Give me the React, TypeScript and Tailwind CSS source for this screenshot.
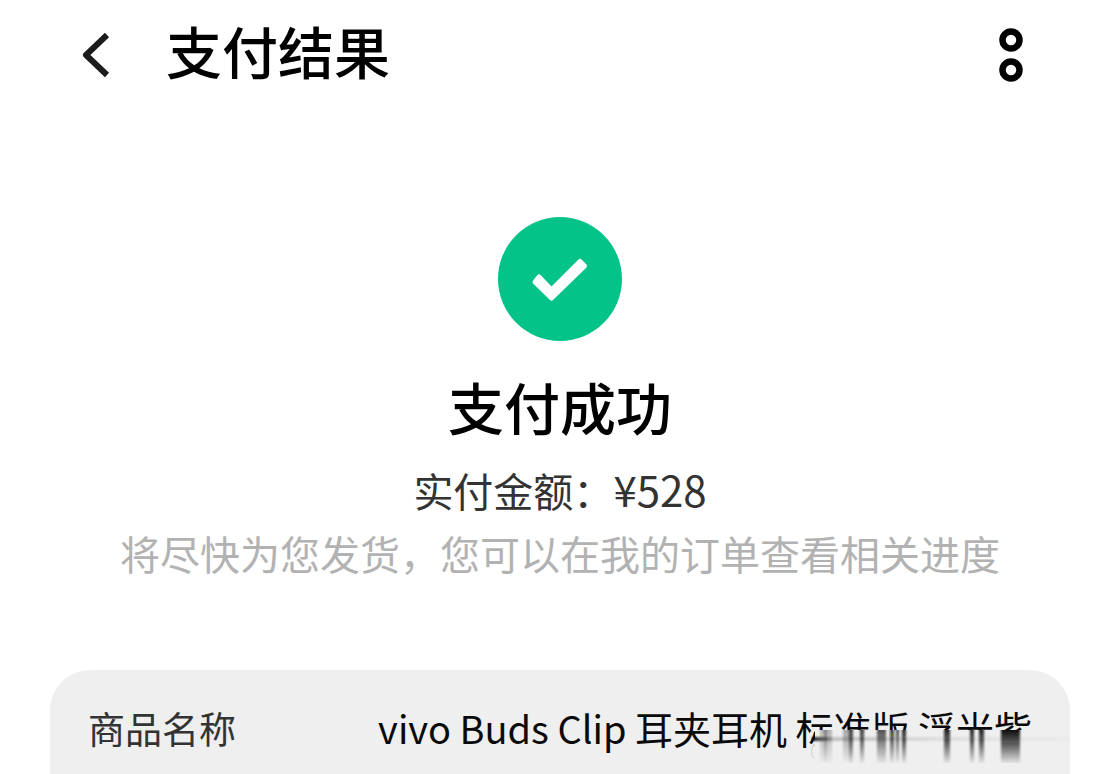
const streaks = [
  { x: 820, w: 12, o: 0.25 },
  { x: 824, w: 3, o: 0.3 },
  { x: 843, w: 9, o: 0.3 },
  { x: 849, w: 4, o: 0.7 },
  { x: 860, w: 4, o: 0.8 },
  { x: 877, w: 9, o: 0.65 },
  { x: 890, w: 4, o: 0.8 },
  { x: 896, w: 3, o: 0.7 },
  { x: 902, w: 4, o: 0.9 },
  { x: 944, w: 6, o: 0.9 },
  { x: 970, w: 4, o: 0.9 },
  { x: 979, w: 5, o: 0.9 },
  { x: 1001, w: 19, o: 1 },
];

function Smudge() {
  return (
    <svg
      className="absolute top-[58px] right-0 w-[259px] h-[40px] pointer-events-none"
      viewBox="811 728 259 40"
      aria-hidden="true"
    >
      <defs>
        <linearGradient id="fade" x1="0" y1="0" x2="0" y2="1">
          <stop offset="0" stopColor="#0a0a0a" />
          <stop offset="0.4" stopColor="#0a0a0a" stopOpacity="0.65" />
          <stop offset="1" stopColor="#0a0a0a" stopOpacity="0.05" />
        </linearGradient>
        <linearGradient id="band" x1="0" y1="0" x2="1" y2="0">
          <stop offset="0" stopColor="#000" stopOpacity="0.9" />
          <stop offset="0.08" stopColor="#000" stopOpacity="0.2" />
          <stop offset="0.5" stopColor="#000" stopOpacity="0.07" />
          <stop offset="1" stopColor="#000" stopOpacity="0.02" />
        </linearGradient>
        <filter id="soft" x="-10%" y="-50%" width="120%" height="200%">
          <feGaussianBlur stdDeviation="1 1" />
        </filter>
        <filter id="smear" x="-10%" y="-10%" width="120%" height="120%">
          <feGaussianBlur stdDeviation="0.9 0.4" />
        </filter>
      </defs>
      <rect x="815" y="730" width="255" height="38" fill="#efefef" />
      <rect x="812" y="737" width="258" height="4" fill="url(#band)" filter="url(#soft)" />
      <g filter="url(#smear)">
        {streaks.map((s) => (
          <rect key={s.x} x={s.x} y="730" width={s.w} height="33" fill="url(#fade)" opacity={s.o} />
        ))}
      </g>
      <path d="M814 744 Q809 752 814 759" fill="none" stroke="#ccc" strokeWidth="1" />
    </svg>
  );
}

export default function App() {
  return (
    <div className="min-h-screen bg-white text-black font-['Noto_Sans_CJK_SC',sans-serif]">
      <header className="flex items-start pt-[10px] pl-[80px] pr-[96px]">
        <button type="button" aria-label="返回" className="mt-5 shrink-0">
          <svg className="w-8 h-12" viewBox="0 0 32 48" fill="none">
            <path d="M27 5 L6 25 L27 45" stroke="#1c1c1c" strokeWidth="6" strokeLinejoin="round" />
          </svg>
        </button>
        <h1 className="ml-[54px] text-[56px] leading-[80px] font-medium">支付结果</h1>
        <button type="button" aria-label="更多" className="mt-4 ml-auto shrink-0">
          <svg className="w-[26px] h-[56px]" viewBox="0 0 26 56" fill="none">
            <circle cx="13" cy="14" r="8.5" stroke="#000" strokeWidth="6.5" />
            <circle cx="13" cy="44" r="8.5" stroke="#000" strokeWidth="6.5" />
          </svg>
        </button>
      </header>

      <main className="px-[50px]">
        <section className="flex flex-col items-center pt-[126px] text-center">
          <svg className="w-[126px] h-[126px]" viewBox="0 0 126 126" aria-hidden="true">
            <circle cx="63" cy="63" r="62" fill="#04c389" />
            <path
              d="M38 66 L42 61 L54.5 74 L83 45.5 L87.500 50 L54.500 82 Z"
              fill="#fff"
              stroke="#fff"
              strokeWidth="5"
              strokeLinejoin="round"
            />
          </svg>
          <h2 className="mt-6 text-[56px] leading-[80px] font-medium">支付成功</h2>
          <p className="mt-[11px] text-[40px] leading-[64px] text-[#333]">
            实付金额：<span className="text-[42px]">¥528</span>
          </p>
          <p className="text-[40px] leading-[62px] text-[#b2b2b2]">
            将尽快为您发货，您可以在我的订单查看相关进度
          </p>
        </section>

        <section className="relative mt-[86px] h-[105px] rounded-t-[40px] bg-[#efefef]">
          <dl className="flex items-center justify-between px-[38px] pt-[31px] leading-[54px] whitespace-nowrap">
            <dt className="text-[37px] text-[#333]">商品名称</dt>
            <dd className="text-[38px] text-[#0a0a0a]">vivo Buds Clip 耳夹耳机 标准版 浮光紫</dd>
          </dl>
          <Smudge />
        </section>
      </main>
    </div>
  );
}
